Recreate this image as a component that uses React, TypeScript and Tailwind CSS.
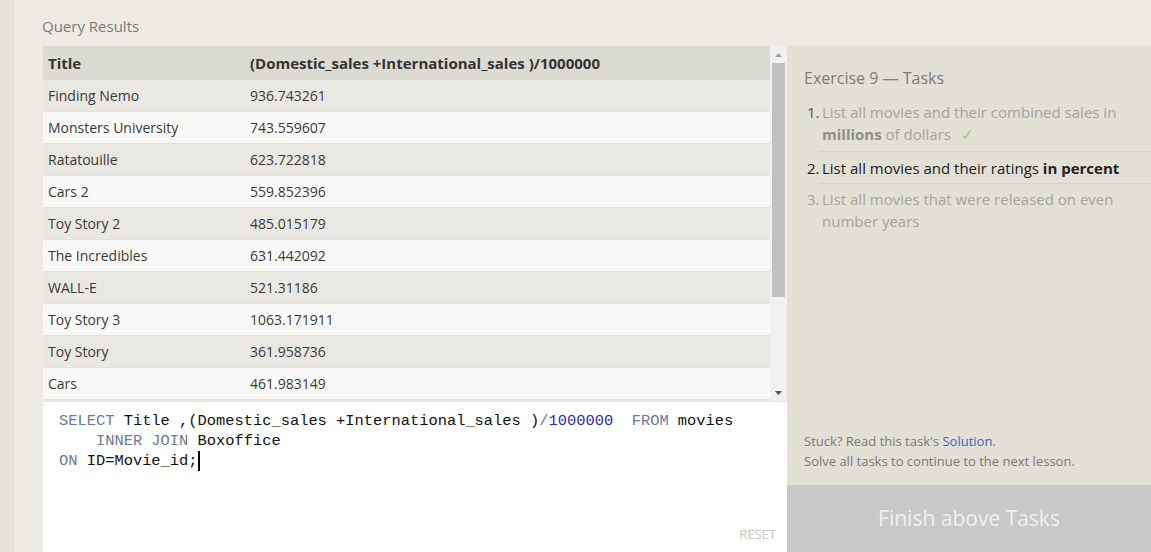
import React from 'react';

const rows: [string, string][] = [
  ['Finding Nemo', '936.743261'],
  ['Monsters University', '743.559607'],
  ['Ratatouille', '623.722818'],
  ['Cars 2', '559.852396'],
  ['Toy Story 2', '485.015179'],
  ['The Incredibles', '631.442092'],
  ['WALL-E', '521.31186'],
  ['Toy Story 3', '1063.171911'],
  ['Toy Story', '361.958736'],
  ['Cars', '461.983149'],
];

const sans = { fontFamily: '"Open Sans", "Noto Sans", sans-serif' };

export default function App() {
  return (
    <div className="flex h-[552px] w-[1151px] overflow-hidden bg-[#eeebe5] text-[#333]" style={sans}>
      {/* left gutter */}
      <div className="w-[15px] shrink-0 bg-[#e5e2dc]" />

      <div className="flex flex-1 flex-col pl-[28px]">
        <div className="-ml-px h-[46px] pt-[15px] text-[15px] leading-[22px] text-[#7b7b78]">Query Results</div>

        <div className="flex flex-1">
          {/* results + editor */}
          <div className="flex w-[744px] shrink-0 flex-col">
            <div className="flex h-[355px]">
              <div className="flex-1 overflow-hidden">
                <div className="flex h-[34px] items-center bg-[#dcdbd2] text-[15px] font-bold text-[#333]">
                  <div className="w-[201px] pl-[5px]">Title</div>
                  <div className="pl-[6px]">(Domestic_sales +International_sales )/1000000</div>
                </div>
                {rows.map(([t, v], i) => (
                  <div
                    key={i}
                    className={`flex h-[32px] items-center border-b border-[#e2e1db] text-[14px] text-[#3a3a3a] ${
                      i % 2 === 0 ? 'bg-[#e9e8e2]' : 'bg-[#f9f9f7]'
                    }`}
                  >
                    <div className="w-[201px] pl-[5px]">{t}</div>
                    <div className="pl-[6px]">{v}</div>
                  </div>
                ))}
              </div>
              {/* scrollbar */}
              <div className="flex w-[17px] shrink-0 flex-col bg-[#f1f1f1]">
                <div className="flex h-[17px] items-center justify-center">
                  <svg width="7" height="4" viewBox="0 0 7 4"><path d="M0 4 L3.5 0 L7 4 Z" fill="#a3a3a3" /></svg>
                </div>
                <div className="mx-[2px] h-[234px] bg-[#c1c1c1]" />
                <div className="flex-1" />
                <div className="flex h-[17px] items-center justify-center">
                  <svg width="7" height="4" viewBox="0 0 7 4"><path d="M0 0 L3.5 4 L7 0 Z" fill="#505050" /></svg>
                </div>
              </div>
            </div>

            {/* editor */}
            <div className="relative flex-1 border-t border-[#e4e4e4] bg-white pl-[16px] pt-[9px]">
              <pre
                className="text-[15.4px] leading-[20px] text-[#111]"
                style={{ fontFamily: '"Liberation Mono", "DejaVu Sans Mono", monospace' }}
              >
                <span className="text-[#6d7895]">SELECT</span> Title ,(Domestic_sales +International_sales )
                <span className="text-[#6d7895]">/</span>
                <span className="text-[#2a2ab0]">1000000</span>{'  '}
                <span className="text-[#6d7895]">FROM</span> movies{'\n'}
                {'    '}
                <span className="text-[#6d7895]">INNER JOIN</span> Boxoffice{'\n'}
                <span className="text-[#6d7895]">ON</span> ID=Movie_id;
                <span className="inline-block h-[20px] w-[2px] align-top bg-black" />
              </pre>
              <div className="absolute bottom-[8px] right-[11px] text-[13px] text-[#c8c8c8]">RESET</div>
            </div>
          </div>

          {/* tasks panel */}
          <div className="flex flex-1 flex-col">
            <div className="flex flex-1 flex-col bg-[#e3e0d6] pl-[17px] pt-[20px] pb-[14px]">
              <div className="text-[16px] text-[#7d7d78]">Exercise 9 — Tasks</div>
              <ol className="mt-[11px] text-[15px] leading-[22px]">
                <li className="flex text-[#a4a49c]">
                  <span className="w-[15px] shrink-0 pl-[3px] text-[#555]">1.</span>
                  <div className="flex-1 border-b border-[#d6d3c9] pb-[6px] pl-[3px]">
                    List all movies and their combined sales in
                    <br />
                    <b className="font-bold text-[#8e8e87]">millions</b> of dollars
                    <span className="ml-[10px] text-[#94c594]">✓</span>
                  </div>
                </li>
                <li className="flex pt-[5px] text-[#222]">
                  <span className="w-[15px] shrink-0 pl-[3px]">2.</span>
                  <div className="flex-1 border-b border-[#d6d3c9] pb-[4px] pl-[3px]">
                    List all movies and their ratings <b className="font-bold">in percent</b>
                  </div>
                </li>
                <li className="flex pt-[4px] text-[#a4a49c]">
                  <span className="w-[15px] shrink-0 pl-[3px]">3.</span>
                  <div className="flex-1 pl-[3px]">
                    List all movies that were released on even
                    <br />
                    number years
                  </div>
                </li>
              </ol>
              <div className="flex-1" />
              <div className="text-[13px] leading-[20px] text-[#7a7a74]">
                Stuck? Read this task's <span className="text-[#3b68c4]">Solution</span>.
                <br />
                Solve all tasks to continue to the next lesson.
              </div>
            </div>
            <div className="flex h-[67px] items-center justify-center bg-[#c8c8c8] text-[21px] text-[#f0f0f0]">
              Finish above Tasks
            </div>
          </div>
        </div>
      </div>
    </div>
  );
}
